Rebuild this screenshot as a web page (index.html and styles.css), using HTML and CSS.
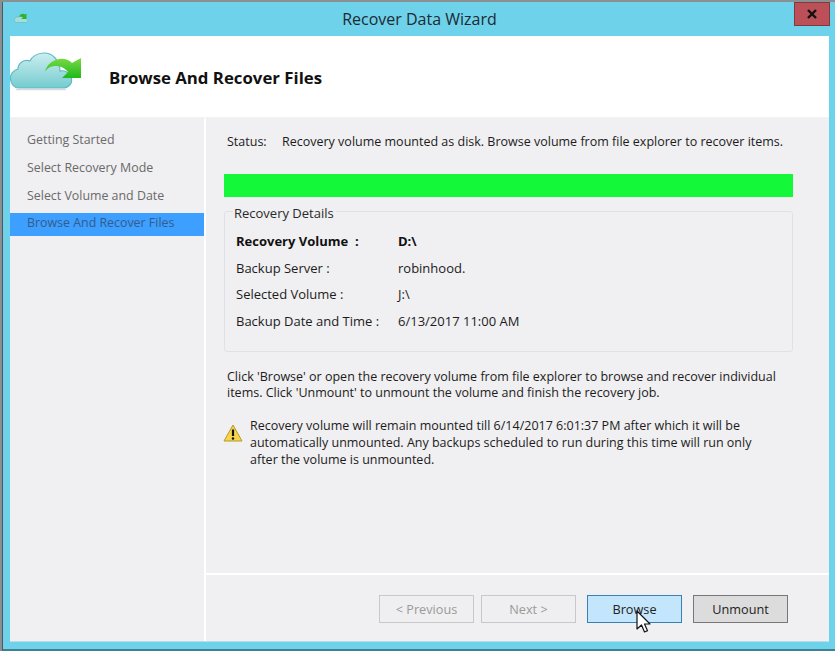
FILE: index.html
```html
<!DOCTYPE html>
<html lang="en">
<head>
<meta charset="utf-8">
<title>Recover Data Wizard</title>
<link rel="stylesheet" href="styles.css">
</head>
<body>
<div class="window">
  <div class="titlebar">
    <svg class="app-icon" width="18" height="14" viewBox="0 0 18 14">
      <path d="M3 12.500h10c2 0 2.500-3 .5-3.500 0-2-2-3-3.500-2C9 5 6.500 5 6 7 3.500 6.500 1 8 1.500 10.500c.3 1.200 1 2 1.500 2z" fill="#a5dcdc" stroke="#62b9c0" stroke-width=".6"/>
      <path d="M6 7c1-3 4-4 6-2.500l1.500-1v5.500H8l2-1.500C9 6.500 7.500 6.500 6 7z" fill="#2bb52b"/>
    </svg>
    <span class="title">Recover Data Wizard</span>
    <div class="close"><svg width="12" height="10" viewBox="0 0 12 10"><path d="M2 1l8 8M10 1L2 9" stroke="#111" stroke-width="2.400"/></svg></div>
  </div>
  <div class="client">
    <header class="header">
      <svg class="logo" width="74" height="42" viewBox="0 0 74 42">
        <defs>
          <linearGradient id="cloud" x1="0" y1="0" x2="0" y2="1">
            <stop offset="0" stop-color="#cdeef0"/>
            <stop offset="1" stop-color="#74cccf"/>
          </linearGradient>
          <linearGradient id="arrow" x1="0" y1="0" x2="0" y2="1">
            <stop offset="0" stop-color="#7ada44"/>
            <stop offset="1" stop-color="#1fb81b"/>
          </linearGradient>
        </defs>
        <path d="M9 39H52C60 39 63 33 61 28C59 23 54 21 50 22C50 12 43 4 34 4C27 4 22 8 20 12C14 10 8 14 8 20C3 21 0 26 .5 30C1 35 4 39 9 39Z" fill="url(#cloud)" stroke="#5fb9c6" stroke-width="1.200"/>
        <path d="M6 40.500h50" stroke="#d5dcdc" stroke-width="1.500"/>
        <path d="M35 23C37 14 46 9 54 10C58 10.500 60 12 62 14L71 9V29H52L58 23C55 19 50 17 46 17C41 17 37 19 35 23Z" fill="url(#arrow)"/>
      </svg>
      <h1 class="heading">Browse And Recover Files</h1>
    </header>
    <div class="main">
      <nav class="sidebar">
        <div class="step">Getting Started</div>
        <div class="step">Select Recovery Mode</div>
        <div class="step">Select Volume and Date</div>
        <div class="step active">Browse And Recover Files</div>
      </nav>
      <section class="pane">
        <div class="pane-body">
          <div class="status">
            <span class="status-label">Status:</span>
            <span>Recovery volume mounted as disk. Browse volume from file explorer to recover items.</span>
          </div>
          <div class="progress"></div>
          <div class="group">
            <div class="legend">Recovery Details</div>
            <div class="row strong"><span class="key">Recovery Volume&nbsp; :</span><span>D:\</span></div>
            <div class="row"><span class="key">Backup Server :</span><span>robinhood.</span></div>
            <div class="row"><span class="key">Selected Volume :</span><span>J:\</span></div>
            <div class="row"><span class="key">Backup Date and Time :</span><span>6/13/2017 11:00 AM</span></div>
          </div>
          <p class="hint">Click 'Browse' or open the recovery volume from file explorer to browse and recover individual<br>items. Click 'Unmount' to unmount the volume and finish the recovery job.</p>
          <div class="warning">
            <svg class="warn-icon" width="20" height="18" viewBox="0 0 20 18">
              <path d="M10 1L19 17H1z" fill="#f6d54a" stroke="#b59a2c" stroke-width="1" stroke-linejoin="round"/>
              <path d="M10 5.500v6.500" stroke="#111" stroke-width="2.200"/>
              <circle cx="10" cy="14.500" r="1.200" fill="#111"/>
            </svg>
            <p class="warn-text">Recovery volume will remain mounted till 6/14/2017 6:01:37 PM after which it will be<br>automatically unmounted. Any backups scheduled to run during this time will run only<br>after the volume is unmounted.</p>
          </div>
        </div>
        <footer class="footer">
          <button class="btn disabled">&lt; Previous</button>
          <button class="btn disabled">Next &gt;</button>
          <button class="btn hover">Browse</button>
          <button class="btn default">Unmount</button>
          <svg class="cursor" width="16" height="24" viewBox="0 0 16 24">
            <path d="M1 1v18l4.500-4 3 7 3-1.300-3-6.700H14z" fill="#fff" stroke="#111" stroke-width="1.200" stroke-linejoin="round"/>
          </svg>
        </footer>
      </section>
    </div>
  </div>
</div>
</body>
</html>
```
FILE: styles.css
```css
* { box-sizing: border-box; }
html, body { margin: 0; padding: 0; }
body {
  width: 835px;
  height: 651px;
  overflow: hidden;
  background: #8a8f92;
  font-family: "Open Sans", "Noto Sans", "Liberation Sans", sans-serif;
  font-size: 12.500px;
  color: #1c1c1c;
}
.window {
  width: 833px;
  height: 651px;
  margin-left: 2px;
  padding: 2px 0 0;
  display: flex;
  flex-direction: column;
}
.titlebar {
  height: 34px;
  flex: none;
  background: #6dd2ea;
  border-left: 1px solid #4a5a62;
  display: flex;
  align-items: center;
  justify-content: center;
  position: relative;
}
.app-icon { position: absolute; left: 10px; top: 8px; }
.title { font-size: 16px; color: #1e2a33; margin-left: 1px; }
.close {
  position: absolute;
  right: 5px;
  top: 0;
  width: 36px;
  height: 24px;
  background: #bb5058;
  border: 1px solid #7f3a40;
  display: flex;
  align-items: center;
  justify-content: center;
}
.client {
  flex: 1;
  background: #6dd2ea;
  padding: 0 6px 7px 7px;
  border-left: 1px solid #4a5a62;
  border-bottom: 2px solid #3f7f92;
  display: flex;
  flex-direction: column;
  min-height: 0;
}
.header {
  height: 81px;
  flex: none;
  background: #fff;
  display: flex;
  align-items: center;
}
.logo { flex: none; position: relative; top: -7px; }
.heading {
  margin: 0 0 0 25px;
  font-size: 16.800px;
  font-weight: 700;
  color: #111;
  position: relative;
  top: 1px;
}
.main {
  flex: 1;
  display: flex;
  min-height: 0;
  background: #fff;
  border-top: 1px solid #f3f3f5;
  border-bottom: 1px solid #bcdde6;
}
.sidebar {
  width: 194px;
  flex: none;
  background: #f0eff1;
  padding-top: 8px;
}
.step {
  height: 28px;
  padding-left: 17px;
  line-height: 27px;
  font-size: 12.400px;
  color: #6a6a6a;
}
.step.active { height: 23px; line-height: 20px; background: #3d9fff; color: #345c8c; margin-top: 3px; }
.pane {
  flex: 1;
  margin-left: 2px;
  background: #f0eff1;
  display: flex;
  flex-direction: column;
  min-width: 0;
}
.pane-body {
  flex: 1;
  padding: 15px 36px 0 18px;
  border-bottom: 2px solid #fff;
}
.status { display: flex; line-height: 17px; }
.status-label { width: 58px; padding-left: 3px; flex: none; }
.progress {
  height: 23px;
  margin-top: 24px;
  background: #14f83a;
}
.group {
  height: 141px;
  margin-top: 14px;
  border: 1px solid #e0e1e6;
  border-radius: 3px;
  padding: 16px 0 0 11px;
  position: relative;
  font-size: 13px;
}
.legend {
  position: absolute;
  left: 8px;
  top: -8px;
  background: #f0eff1;
  padding: 0 2px 0 1px;
  line-height: 18px;
  color: #2a2a2a;
}
.row { display: flex; height: 26.700px; line-height: 26px; }
.row.strong { font-weight: 700; color: #111; }
.key { width: 162px; flex: none; }
.hint { margin: 17px 0 0 3px; line-height: 16px; }
.warning { display: flex; margin-top: 12px; }
.warn-icon { flex: none; margin-top: 11px; margin-left: -1px; }
.warn-text { margin: 4px 0 0 7px; line-height: 17px; }
.footer {
  height: 66px;
  flex: none;
  padding: 20px 0 0 173px;
  display: flex;
  position: relative;
}
.btn {
  width: 95px;
  height: 28px;
  margin-right: 12px;
  padding: 0;
  font: inherit;
  font-size: 12.700px;
  color: #222;
  background: #e1e1e1;
  border: 1px solid #adadad;
}
.btn.disabled { color: #9a9a9a; background: #efeef0; border-color: #c8c8c8; margin-right: 7px; }
.btn.disabled + .btn.hover { margin-left: 4px; }
.btn.hover { background: #c3e6fd; border-color: #3c7fb1; }
.btn.default { background: #dcdcdc; border-color: #777; margin-right: 0; margin-left: -1px; }
.cursor { position: absolute; left: 430px; top: 35px; }
```
